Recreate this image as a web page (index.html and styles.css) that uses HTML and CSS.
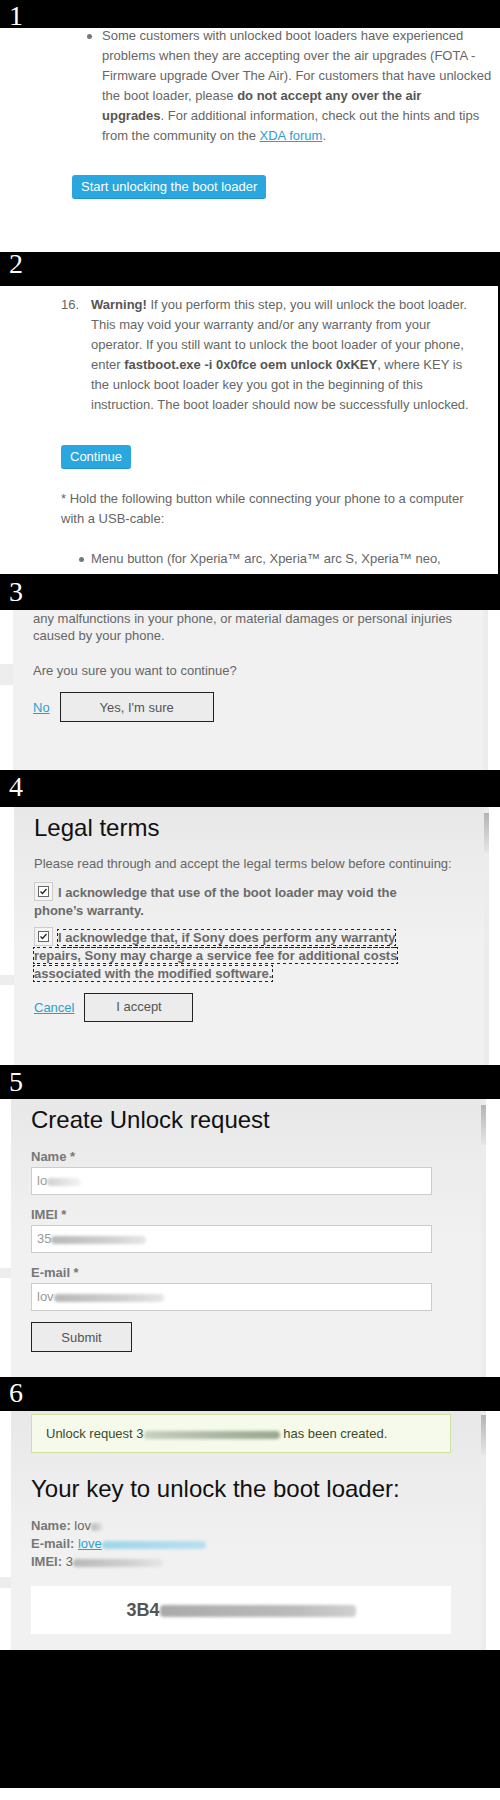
FILE: index.html
```html
<!DOCTYPE html>
<html lang="en">
<head>
    <meta charset="UTF-8">
    <title>Unlock the boot loader</title>
    <link rel="stylesheet" href="styles.css">
</head>
<body>
    <!-- 1: info -->
    <div class="bar bar-1">1</div>
    <div class="shot shot-1">
        <ul class="bullets">
            <li>Some customers with unlocked boot loaders have experienced problems when they are accepting over the air upgrades (FOTA - Firmware upgrade Over The Air). For customers that have unlocked the boot loader, please <b>do not accept any over the air<br>upgrades</b>. For additional information, check out the hints and tips from the community on the <a href="#">XDA forum</a>.</li>
        </ul>
        <a class="btn-blue" href="#">Start unlocking the boot loader</a>
    </div>

    <!-- 2: warning step -->
    <div class="bar bar-2">2</div>
    <div class="shot shot-2">
        <div class="step">
            <span class="step-no">16.</span>
            <span><b>Warning!</b> If you perform this step, you will unlock the boot loader. This may void your warranty and/or any warranty from your operator. If you still want to unlock the boot loader of your phone, enter <b>fastboot.exe -i 0x0fce oem unlock 0xKEY</b>, where KEY is the unlock boot loader key you got in the beginning of this instruction. The boot loader should now be successfully unlocked.</span>
        </div>
        <a class="btn-blue btn-continue" href="#">Continue</a>
        <p class="note">* Hold the following button while connecting your phone to a computer with a USB-cable:</p>
        <ul class="bullets">
            <li>Menu button (for Xperia™ arc, Xperia™ arc S, Xperia™ neo, Xperia™ neo V, Xperia™ Play)</li>
        </ul>
    </div>

    <!-- 3: confirm -->
    <div class="bar bar-3">3</div>
    <div class="shot shot-3">
        <div class="side side-3"><div class="side-gap"></div></div>
        <div class="card card-flat">
            <p class="tight">any malfunctions in your phone, or material damages or personal injuries caused by your phone.</p>
            <p class="tight ask">Are you sure you want to continue?</p>
            <div class="actions actions-3">
                <a href="#">No</a>
                <button class="btn-grey btn-sure">Yes, I'm sure</button>
            </div>
        </div>
        <div class="track"></div>
        <div class="rail"></div>
    </div>

    <!-- 4: legal terms -->
    <div class="bar bar-4">4</div>
    <div class="shot shot-4">
        <div class="side side-4"><div class="side-gap"></div></div>
        <div class="card">
            <h2>Legal terms</h2>
            <p class="intro">Please read through and accept the legal terms below before continuing:</p>
            <p class="check-row">
                <span class="check"><svg width="11" height="11" viewBox="0 0 11 11"><rect x="0.5" y="0.5" width="10" height="10" fill="#fff" stroke="#666"/><path d="M2.5 5.5 L4.5 7.5 L8.5 3" fill="none" stroke="#222" stroke-width="1.3"/></svg></span>I acknowledge that use of the boot loader may void the phone’s warranty.
            </p>
            <p class="check-row check-row-2">
                <span class="check"><svg width="11" height="11" viewBox="0 0 11 11"><rect x="0.5" y="0.5" width="10" height="10" fill="#fff" stroke="#666"/><path d="M2.5 5.5 L4.5 7.5 L8.5 3" fill="none" stroke="#222" stroke-width="1.3"/></svg></span><span class="focus">I acknowledge that, if Sony does perform any warranty repairs, Sony may charge a service fee for additional costs associated with the modified software.</span>
            </p>
            <div class="actions actions-4">
                <a href="#">Cancel</a>
                <button class="btn-grey btn-accept">I accept</button>
            </div>
        </div>
        <div class="track"><div class="thumb"></div></div>
        <div class="rail"></div>
    </div>

    <!-- 5: request form -->
    <div class="bar bar-5">5</div>
    <div class="shot shot-5">
        <div class="side side-5"><div class="side-gap"></div></div>
        <div class="card">
            <h2>Create Unlock request</h2>
            <div class="field field-first">
                <label>Name *</label>
                <div class="input">lo<span class="smudge smudge-name"></span></div>
            </div>
            <div class="field">
                <label>IMEI *</label>
                <div class="input">35<span class="smudge smudge-imei"></span></div>
            </div>
            <div class="field">
                <label>E-mail *</label>
                <div class="input">lov<span class="smudge smudge-mail"></span></div>
            </div>
            <button class="btn-grey btn-submit">Submit</button>
        </div>
        <div class="track"><div class="thumb"></div></div>
        <div class="rail"></div>
    </div>

    <!-- 6: result -->
    <div class="bar bar-6">6</div>
    <div class="shot shot-6">
        <div class="side side-6"><div class="side-gap"></div></div>
        <div class="card">
            <div class="success">Unlock request 3<span class="smudge smudge-req"></span> has been created.</div>
            <h2 class="key-title">Your key to unlock the boot loader:</h2>
            <div class="info">
                <div><b>Name:</b> lov<span class="smudge smudge-short"></span></div>
                <div><b>E-mail:</b> <a href="#">love<span class="smudge smudge-link"></span></a></div>
                <div><b>IMEI:</b> 3<span class="smudge smudge-id"></span></div>
            </div>
            <div class="key">3B4<span class="smudge smudge-key"></span></div>
        </div>
        <div class="track"><div class="thumb"></div></div>
        <div class="rail"></div>
    </div>

    <div class="tail"></div>
</body>
</html>
```

FILE: styles.css
```css
body {
    margin: 0;
    background-color: white;
    font-family: "Liberation Sans", Arial, sans-serif;
    font-size: 13px;
    color: #666;
}
a {
    color: #2d9fcf;
}
b {
    color: #555;
}

/* black number strips */
.bar {
    background-color: black;
    color: white;
    font-family: "Liberation Serif", "Times New Roman", serif;
    font-size: 28px;
    line-height: 22px;
    padding-left: 9px;
    box-sizing: border-box;
}
.bar-1 { height: 28px; padding-top: 5px; }
.bar-2 { height: 34px; padding-top: 1px; }
.bar-3 { height: 36px; padding-top: 7px; }
.bar-4 { height: 37px; padding-top: 6px; }
.bar-5 { height: 34px; padding-top: 6px; }
.bar-6 { height: 34px; padding-top: 5px; }

.shot {
    overflow: hidden;
    box-sizing: border-box;
}

/* bullets */
.bullets {
    margin: 0;
    padding: 0 0 0 30px;
    list-style: none;
    line-height: 20px;
}
.bullets li::before {
    content: "";
    float: left;
    width: 5px;
    height: 5px;
    border-radius: 50%;
    background-color: #777;
    margin: 8px 0 0 -15px;
}

.btn-blue {
    display: block;
    width: fit-content;
    background-color: #29a7de;
    border-bottom: 1px solid #1f93c6;
    color: white;
    text-decoration: none;
    line-height: 23px;
    padding: 0 9px;
    border-radius: 3px;
}

/* 1 */
.shot-1 {
    height: 224px;
    padding: 0 2px 0 72px;
}
.shot-1 .bullets {
    margin-top: -2px;
}
.shot-1 .btn-blue {
    margin-top: 29px;
}

/* 2 */
.shot-2 {
    height: 288px;
    padding: 9px 20px 0 61px;
    border-right: 2px solid black;
}
.step {
    display: flex;
    line-height: 20px;
}
.step-no {
    flex: none;
    width: 30px;
}
.btn-continue {
    margin-top: 30px;
}
.note {
    margin: 20px 0 0;
    line-height: 20px;
}
.shot-2 .bullets {
    margin-top: 20px;
}
.shot-2 .bullets li::before {
    margin-left: -12px;
}

/* grey dialog screenshots */
.shot-3, .shot-4, .shot-5, .shot-6 {
    display: flex;
}
.shot-3 { height: 160px; }
.shot-4 { height: 258px; }
.shot-5 { height: 278px; }
.shot-6 { height: 239px; }

.side {
    flex: none;
    background-color: white;
}
.side-gap {
    background-color: #ededed;
}
.side-3 { width: 13px; padding-top: 54px; }
.side-3 .side-gap { height: 21px; }
.side-4 { width: 14px; padding-top: 168px; }
.side-4 .side-gap { height: 10px; }
.side-5 { width: 11px; padding-top: 169px; }
.side-5 .side-gap { height: 10px; }
.side-6 { width: 11px; padding-top: 166px; }
.side-6 .side-gap { height: 11px; }

.card {
    flex: 1;
    min-width: 0;
    padding: 0 20px;
    background: linear-gradient(to bottom, #e8e8e8, #f1f1f1 140px);
}
.card-flat {
    background: #f1f1f1;
}
.track {
    flex: none;
    width: 5px;
    padding-top: 6px;
    background-color: #ececec;
}
.shot-6 .track {
    padding-top: 4px;
}
.thumb {
    height: 40px;
    background: linear-gradient(to bottom, #b4b4b4, #e6e6e6);
}
.rail {
    flex: none;
    background-color: white;
}
.shot-3 .rail { width: 12px; }
.shot-4 .rail { width: 11px; }
.shot-5 .rail, .shot-6 .rail { width: 14px; }

h2 {
    margin: 6px 0 0;
    font-size: 24px;
    font-weight: normal;
    line-height: 29px;
    color: #111;
}

.btn-grey {
    display: block;
    height: 30px;
    border: 1px solid #222;
    background-color: #ececec;
    color: #555;
    font-family: inherit;
    font-size: 13px;
    padding: 0;
}

.actions {
    display: flex;
    align-items: center;
    gap: 10px;
}

/* 3 */
.tight {
    margin: 0;
    line-height: 17px;
}
.ask {
    margin-top: 18px;
}
.actions-3 {
    margin-top: 13px;
}
.btn-sure {
    width: 154px;
}

/* 4 */
.intro {
    margin: 13px 0 0;
    line-height: 18px;
}
.check-row {
    margin: 11px 0 0;
    line-height: 18px;
    font-weight: bold;
    color: #6a6a6a;
    padding-right: 50px;
}
.check-row-2 {
    margin-top: 9px;
}
.check {
    display: inline-flex;
    align-items: center;
    justify-content: center;
    width: 19px;
    height: 19px;
    box-sizing: border-box;
    border: 1px solid #cdcdcd;
    background-color: #f4f4f4;
    vertical-align: top;
    margin: -2px 5px 0 0;
}
.focus {
    outline: 1px dotted #222;
}
.actions-4 {
    margin-top: 10px;
}
.btn-accept {
    width: 109px;
    height: 29px;
    padding-bottom: 2px;
}

/* 5 */
.field {
    margin-top: 12px;
}
.field-first {
    margin-top: 15px;
}
.field label {
    display: block;
    line-height: 16px;
    margin-bottom: 2px;
    font-weight: bold;
    color: #777;
}
.input {
    width: 401px;
    height: 28px;
    box-sizing: border-box;
    border: 1px solid #ccc;
    background-color: white;
    padding-left: 5px;
    line-height: 26px;
    color: #999;
}
.btn-submit {
    width: 101px;
    margin-top: 11px;
}

/* blurred personal data */
.smudge {
    display: inline-block;
    height: 8px;
    vertical-align: middle;
    border-radius: 4px;
    background: linear-gradient(to right, #b8b8b8, #cfcfcf 60%, #e6e6e6);
    filter: blur(1.5px);
}
.smudge-name { width: 34px; background: linear-gradient(to right, #cfcfcf, #f4f4f4); }
.smudge-imei { width: 95px; }
.smudge-mail { width: 110px; }
.smudge-req { width: 136px; background: linear-gradient(to right, #c8d0c0, #a8b4a0 60%, #9aa890); }
.smudge-short { width: 12px; }
.smudge-link { width: 104px; background: linear-gradient(to right, #9fd6ea, #b8e0ef); }
.smudge-id { width: 90px; }
.smudge-key { width: 196px; height: 12px; background: linear-gradient(to right, #aaa, #bbb 70%, #d0d0d0); }

/* 6 */
.success {
    margin-top: 3px;
    width: 420px;
    height: 39px;
    box-sizing: border-box;
    border: 1px solid #cfe0a6;
    background-color: #f5faea;
    padding-left: 14px;
    line-height: 37px;
    color: #3d4a2c;
}
.key-title {
    margin-top: 21px;
}
.info {
    margin-top: 14px;
    line-height: 18px;
}
.info b {
    color: #777;
}
.key {
    margin-top: 15px;
    width: 420px;
    height: 48px;
    background-color: white;
    text-align: center;
    line-height: 48px;
    font-size: 18px;
    font-weight: bold;
    color: #555;
}

.tail {
    height: 138px;
    background-color: black;
}
```
